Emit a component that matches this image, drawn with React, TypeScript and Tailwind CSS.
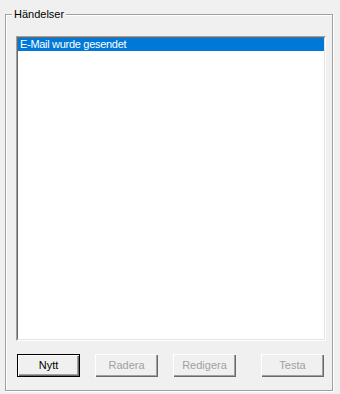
import React from "react";

const font = { fontFamily: '"Liberation Sans", Arial, sans-serif' };

const Button = ({ label, isDefault }: { label: string; isDefault?: boolean }) => {
  if (isDefault) {
    return (
      <div className="w-[63px] h-[23px] border border-black bg-[#f0f0f0]">
        <div className="w-full h-full flex items-center justify-center text-[11px] text-black shadow-[inset_1px_1px_0_#ffffff,inset_-1px_-1px_0_#696969,inset_-2px_-2px_0_#a0a0a0]">
          {label}
        </div>
      </div>
    );
  }
  return (
    <div className="w-[63px] h-[23px] bg-[#f0f0f0] flex items-center justify-center text-[11px] text-[#a0a0a0] shadow-[inset_1px_1px_0_#ffffff,inset_-1px_-1px_0_#696969,inset_-2px_-2px_0_#a0a0a0]">
      {label}
    </div>
  );
};

const App = () => {
  return (
    <div className="w-[340px] h-[394px] bg-[#f0f0f0] pt-[14px] pl-[5px] overflow-hidden" style={font}>
      <div className="relative w-[328px] h-[377px] border border-[#a0a0a0] shadow-[inset_1px_1px_0_#ffffff,1px_1px_0_#ffffff] pl-[10px] pt-[21px]">
        <span className="absolute left-[6px] top-[-7px] px-[2px] bg-[#f0f0f0] text-[11px] leading-[13px] text-black">
          Händelser
        </span>

        <div className="w-[310px] h-[305px] border-t border-l border-[#a0a0a0] border-r-white border-b-white border-r border-b">
          <div className="w-full h-full bg-white border-t border-l border-[#696969] border-r-[#e3e3e3] border-b-[#e3e3e3] border-r border-b">
            <div className="h-[13px] bg-[#0078d7] text-white text-[11px] leading-[13px] pl-[2px] tracking-[-0.3px]">
              E-Mail wurde gesendet
            </div>
          </div>
        </div>

        <div className="flex mt-[13px] pl-[1px]">
          <Button label="Nytt" isDefault />
          <div className="ml-[15px]">
            <Button label="Radera" />
          </div>
          <div className="ml-[15px]">
            <Button label="Redigera" />
          </div>
          <div className="ml-[25px]">
            <Button label="Testa" />
          </div>
        </div>
      </div>
    </div>
  );
};

export default App;
